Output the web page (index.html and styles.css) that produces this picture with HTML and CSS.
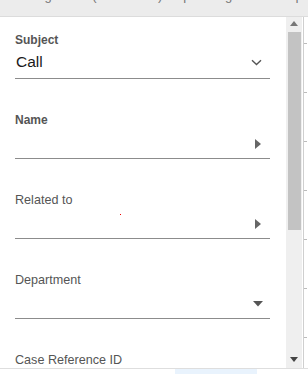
FILE: index.html
```html
<!DOCTYPE html>
<html>
<head>
<meta charset="utf-8">
<link rel="stylesheet" href="styles.css">
</head>
<body>
<div class="topbar"><div class="toptext">Log a Call (Salesforce) · Upcoming Tasks · Inquiry</div></div>
<div class="main">
  <div class="form">
    <div class="field">
      <div class="label bold">Subject</div>
      <div class="value">
        <span class="text">Call</span>
        <svg class="icon" width="11" height="7" viewBox="0 0 11 7"><path d="M1 1.2 L5.5 5.5 L10 1.2" fill="none" stroke="#555" stroke-width="1.4"/></svg>
      </div>
    </div>
    <div class="field">
      <div class="label bold">Name</div>
      <div class="value">
        <span class="text"></span>
        <svg class="icon tri-r" width="6" height="10" viewBox="0 0 6 10"><path d="M0 0 L6 5 L0 10 Z" fill="#666"/></svg>
      </div>
    </div>
    <div class="field rel">
      <div class="label">Related to</div>
      <div class="value">
        <span class="text"></span>
        <span class="dot"></span>
        <svg class="icon tri-r" width="6" height="10" viewBox="0 0 6 10"><path d="M0 0 L6 5 L0 10 Z" fill="#666"/></svg>
      </div>
    </div>
    <div class="field">
      <div class="label">Department</div>
      <div class="value">
        <span class="text"></span>
        <svg class="icon tri-d" width="10" height="6" viewBox="0 0 10 6"><path d="M0 0 L10 0 L5 5.5 Z" fill="#555"/></svg>
      </div>
    </div>
    <div class="field">
      <div class="label">Case Reference ID</div>
      <div class="value">
        <span class="text"></span>
      </div>
    </div>
  </div>
  <div class="scrollbar">
    <svg class="arrow up" width="8" height="5" viewBox="0 0 8 5"><path d="M0 5 L4 0 L8 5 Z" fill="#777"/></svg>
    <div class="thumb"></div>
    <div class="spacer"></div>
    <svg class="arrow down" width="8" height="5" viewBox="0 0 8 5"><path d="M0 0 L8 0 L4 5 Z" fill="#444"/></svg>
  </div>
  <div class="edge">
    <div class="tick"></div><div class="tick"></div><div class="tick"></div><div class="tick"></div><div class="tick"></div><div class="tick"></div><div class="tick"></div>
  </div>
</div>
<div class="bottom"><div class="bluepatch"></div></div>
</body>
</html>
```
FILE: styles.css
```css
* { box-sizing: border-box; }
html, body { margin: 0; padding: 0; }
body {
  width: 308px;
  height: 374px;
  overflow: hidden;
  background: #fff;
  font-family: "Liberation Sans", Arial, sans-serif;
  display: flex;
  flex-direction: column;
}
.topbar {
  height: 17px;
  flex: none;
  background: #ececec;
  border-bottom: 1px solid #dcdcdc;
  overflow: hidden;
  position: relative;
}
.toptext {
  font-size: 13px;
  color: #777;
  line-height: 13px;
  margin-top: -11px;
  padding-left: 30px;
  white-space: nowrap;
}
.main {
  flex: 1;
  display: flex;
  min-height: 0;
}
.form {
  width: 286px;
  flex: none;
  padding: 16px 16px 0 15px;
  overflow: hidden;
}
.field {
  margin-bottom: 34px;
  position: relative;
}
.label {
  font-size: 12.6px;
  line-height: 14px;
  color: #555;
  height: 14px;
  white-space: nowrap;
}
.label.bold {
  font-weight: bold;
  font-size: 12px;
}
.value {
  height: 32px;
  border-bottom: 1px solid #8c8c8c;
  display: flex;
  align-items: flex-end;
  padding-bottom: 7px;
  padding-left: 1px;
}
.text {
  flex: 1;
  font-size: 15.5px;
  line-height: 18px;
  height: 18px;
  color: #1a1a1a;
}
.icon {
  flex: none;
  margin-right: 8px;
  display: block;
}
.field:first-child .icon { margin-bottom: 5px; }
.tri-r { margin-bottom: 2px; margin-right: 9px; }
.tri-d { margin-bottom: 4px; margin-right: 7px; }
.dot {
  position: absolute;
  left: 105px;
  top: 21px;
  width: 1px;
  height: 1px;
  background: #e00;
}
.scrollbar {
  width: 16px;
  flex: none;
  background: #efefef;
  display: flex;
  flex-direction: column;
  align-items: center;
  padding: 4px 0 6px;
}
.arrow { display: block; flex: none; }
.thumb {
  width: 13px;
  height: 198px;
  margin-top: 6px;
  background: #c3c3c3;
}
.spacer { flex: 1; }
.edge {
  flex: 1;
  border-left: 1px solid #cfcfcf;
  margin-left: 1px;
  padding-top: 26px;
  display: flex;
  flex-direction: column;
  gap: 48px;
}
.tick {
  width: 3px;
  height: 1px;
  background: #bbb;
}
.bottom {
  height: 6px;
  flex: none;
  border-top: 1px solid #dedede;
  background: #fff;
  position: relative;
}
.bluepatch {
  position: absolute;
  left: 175px;
  width: 82px;
  top: 0;
  bottom: 0;
  background: #e9f3fd;
}
```
